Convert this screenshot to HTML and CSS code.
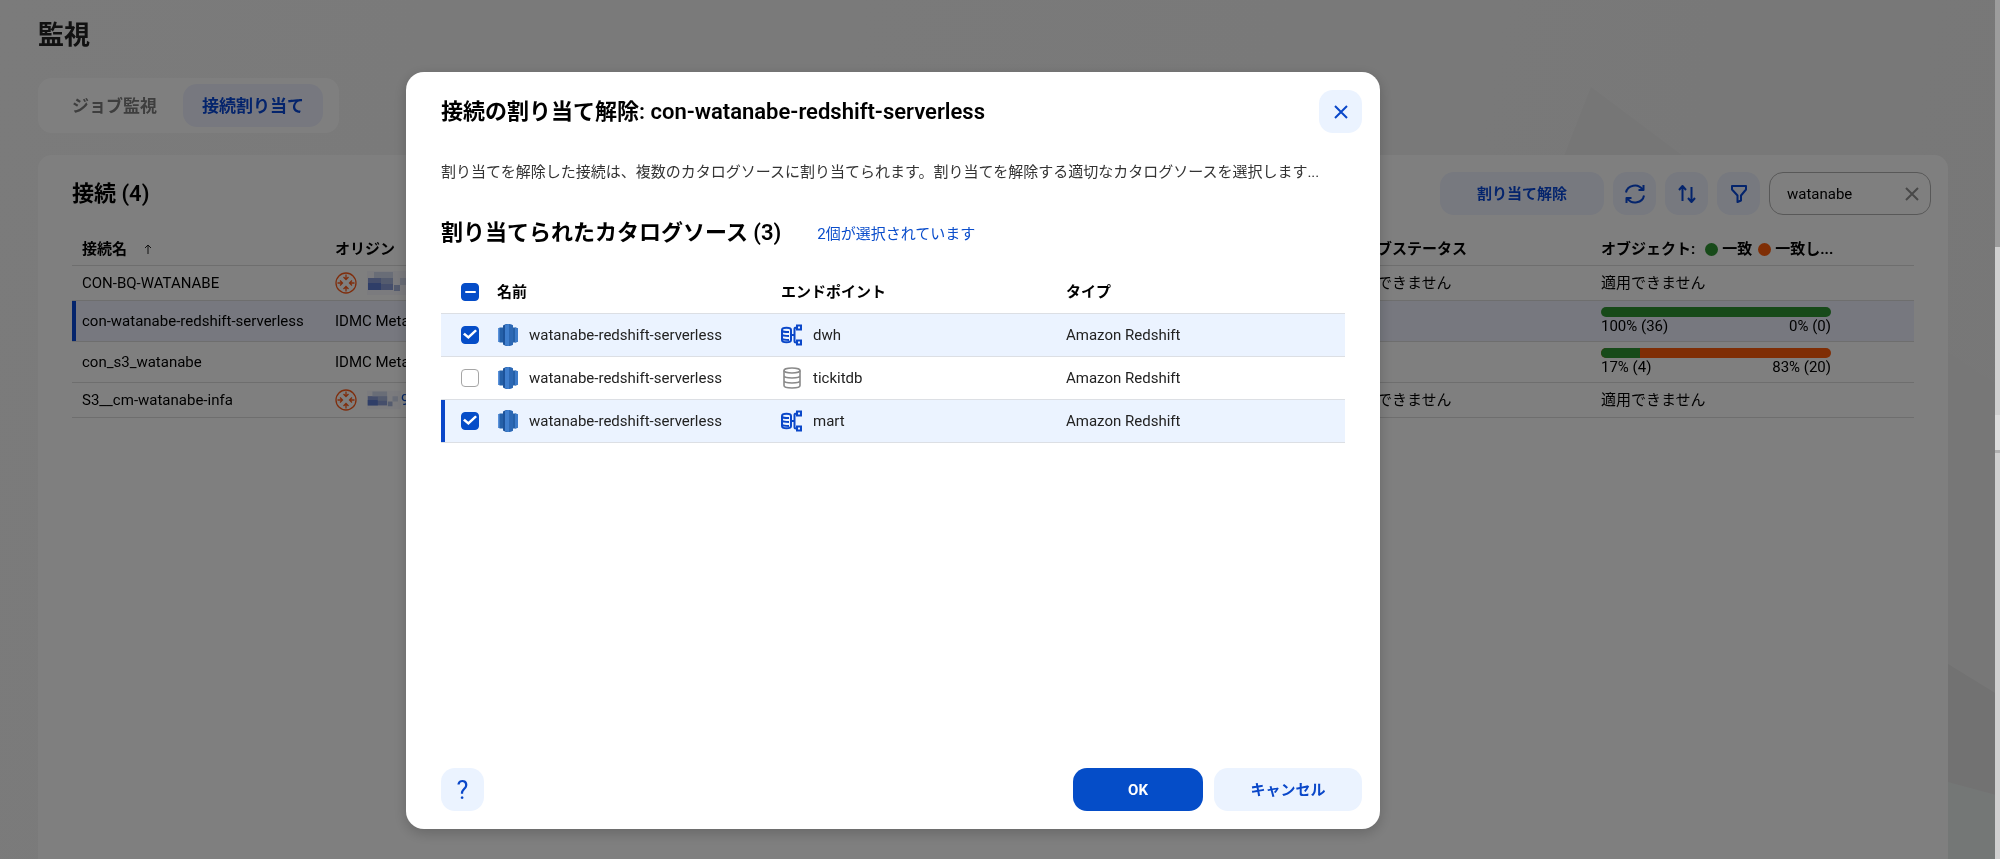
FILE: index.html
```html
<!DOCTYPE html>
<html lang="ja">
<head>
<meta charset="utf-8">
<title>監視</title>
<link rel="stylesheet" href="styles.css">
</head>
<body>
<svg class="symbols" aria-hidden="true">
  <symbol id="i-redshift" viewBox="0 0 22 22">
    <path fill="#2560a8" d="M1 4.500l2-1h16l2 1v13l-2 1H3l-2-1z"/>
    <path fill="#5a92dc" d="M1 4.500l1.500-.7v14.400L1 17.500z"/>
    <path fill="#3d7bc9" d="M18 3.500l3 1v13l-3 1z"/>
    <path fill="#1c539b" d="M6 1.500q5-2.500 5-1.500v22q0 1-5-1.500z"/>
    <path fill="#3f7ecd" d="M8 1q3-1.500 5-.8 3 .8 3 1.300v19q0 .5-3 1.300-2 .7-5-.8z"/>
    <path fill="#2c68b4" d="M12 0q4 .9 4 1.500v19q0 .6-4 1.500z"/>
  </symbol>
  <symbol id="i-schema" viewBox="0 0 22 22">
    <g fill="none" stroke="#0a47c9" stroke-width="2">
      <path d="M1 6v10c0 3 9 3 9 0V6c0-3-9-3-9 0c0 2 2 2 7 2M1 10.500c1 1.500 3 1.500 7 1.500M1 14.500c1 1.500 3 1.500 7 1.500"/>
      <path d="M10 11h3.500M16 3.500h-1q-1.500 0-1.500 1.500v12q0 1.500 1.500 1.500h1M16 1.500h4v4h-4zM16 16.500h4v4h-4z"/>
    </g>
  </symbol>
  <symbol id="i-db" viewBox="0 0 22 22">
    <g fill="none" stroke="#8a8a8a" stroke-width="1.600">
      <ellipse cx="11" cy="3.500" rx="8" ry="2.500"/>
      <path d="M3 3.500v15c0 3.300 16 3.300 16 0v-15M3 8.500c0 3.300 16 3.300 16 0M3 13.500c0 3.300 16 3.300 16 0"/>
    </g>
  </symbol>
  <symbol id="i-origin" viewBox="0 0 22 22">
    <g fill="none" stroke="#ff5c1a" stroke-width="1.300">
      <circle cx="11" cy="11" r="10"/>
      <path d="M11 2.500v5M8.500 5l2.500 2.500 2.500-2.500M11 19.500v-5M8.500 17l2.500-2.500 2.500 2.500M2.500 11h5M5 8.500l2.500 2.500-2.500 2.500M19.500 11h-5M17 8.500l-2.500 2.500 2.500 2.500"/>
    </g>
  </symbol>
  <symbol id="i-mosaic" viewBox="0 0 44 24">
    <path fill="#f6f7fc" d="M0 0h44v24H0z"/>
    <path fill="#8a9cd6" d="M1 7h25v12H1z"/>
    <path fill="#5f7cd0" d="M1 12h13v7H1z"/>
    <path fill="#a9b6dd" d="M14 7h12v6H14zM27 14h6v6h-6z"/>
    <path fill="#d3daee" d="M7 1h19v6H7zM33 7h7v7h-7z"/>
  </symbol>
</svg>

<svg class="backdrop-art" viewBox="0 0 2000 859" preserveAspectRatio="none" aria-hidden="true">
  <path fill="#ececec" d="M1591 87l92 69h-119z"/>
  <path fill="#efefef" d="M1948 352l52 35v472h-52z"/>
  <path fill="#e4e4e4" d="M1948 664l52 32v163h-52z"/>
  <path fill="#e9eeed" d="M1948 782l52 14v63h-52z"/>
</svg>

<main class="page">
  <h1 class="page-title">監視</h1>
  <nav class="tabs">
    <button class="tab" type="button">ジョブ監視</button>
    <button class="tab tab-active" type="button">接続割り当て</button>
  </nav>

  <section class="panel">
    <div class="toolbar">
      <h2 class="heading">接続 (4)</h2>
      <button class="btn btn-soft btn-unassign" type="button">割り当て解除</button>
      <button class="btn btn-soft btn-icon" type="button" aria-label="更新">
        <svg class="icon" viewBox="0 0 20 20"><path d="M1 8.500a9 8.500 0 0 1 16.500-3M18.500 1v5h-5M19 11.500a9 8.500 0 0 1-16.500 3M1.500 19v-5h5"/></svg>
      </button>
      <button class="btn btn-soft btn-icon" type="button" aria-label="並べ替え">
        <svg class="icon" viewBox="0 0 20 20"><path d="M5.500 17V2M2 6l3.500-4L9 6M14.500 3v15M11 14l3.500 4 3.500-4"/></svg>
      </button>
      <button class="btn btn-soft btn-icon" type="button" aria-label="フィルタ">
        <svg class="icon" viewBox="0 0 20 20"><path d="M3 2h14v3.500L12 11.500v5L8.500 18v-6.500L3 5.500z"/></svg>
      </button>
      <div class="search">
        <input class="search-input" type="text" value="watanabe" aria-label="検索">
        <button class="search-clear" type="button" aria-label="クリア">
          <svg class="clear-icon" viewBox="0 0 14 14"><path d="M1 1l12 12M13 1L1 13"/></svg>
        </button>
      </div>
    </div>

    <table class="grid">
      <colgroup><col class="g-name"><col><col class="g-status"><col class="g-objects"></colgroup>
      <thead>
        <tr>
          <th>接続名<svg class="sort" viewBox="0 0 8 10"><path d="M4 10V1M1 4l3-3 3 3"/></svg></th>
          <th>オリジン</th>
          <th>ジョブステータス</th>
          <th><div class="legend">オブジェクト:<span class="dot dot-match"></span>一致<span class="dot dot-miss"></span>一致し...</div></th>
        </tr>
      </thead>
      <tbody>
        <tr>
          <td>CON-BQ-WATANABE</td>
          <td><div class="origin"><svg class="icon-l"><use href="#i-origin"/></svg><svg class="mosaic"><use href="#i-mosaic"/></svg></div></td>
          <td>適用できません</td>
          <td>適用できません</td>
        </tr>
        <tr class="tall picked">
          <td>con-watanabe-redshift-serverless</td>
          <td>IDMC Metadata</td>
          <td></td>
          <td>
            <div class="meter"><span class="meter-match" style="width:100%"></span></div>
            <div class="meter-labels"><span>100% (36)</span><span>0% (0)</span></div>
          </td>
        </tr>
        <tr class="tall">
          <td>con_s3_watanabe</td>
          <td>IDMC Metadata</td>
          <td></td>
          <td>
            <div class="meter"><span class="meter-match" style="width:17%"></span></div>
            <div class="meter-labels"><span>17% (4)</span><span>83% (20)</span></div>
          </td>
        </tr>
        <tr>
          <td>S3__cm-watanabe-infa</td>
          <td><div class="origin"><svg class="icon-l"><use href="#i-origin"/></svg><svg class="mosaic mosaic-short"><use href="#i-mosaic"/></svg><a class="link" href="#">9</a></div></td>
          <td>適用できません</td>
          <td>適用できません</td>
        </tr>
      </tbody>
    </table>
  </section>
</main>

<div class="edge"><span class="edge-thumb"></span><span class="edge-mark"></span></div>

<div class="overlay">
  <div class="dialog" role="dialog" aria-modal="true" aria-labelledby="dialog-title">
    <header class="dialog-head">
      <h2 class="heading" id="dialog-title">接続の割り当て解除: con-watanabe-redshift-serverless</h2>
      <button class="btn btn-tint btn-icon" type="button" aria-label="閉じる">
        <svg class="close-icon" viewBox="0 0 14 14"><path d="M1 1l12 12M13 1L1 13"/></svg>
      </button>
    </header>
    <div class="dialog-body">
      <p class="note">割り当てを解除した接続は、複数のカタログソースに割り当てられます。割り当てを解除する適切なカタログソースを選択します...</p>
      <div class="subhead">
        <h3 class="heading">割り当てられたカタログソース (3)</h3>
        <a class="link" href="#">2個が選択されています</a>
      </div>
      <table class="sources">
        <colgroup><col class="s-check"><col class="s-name"><col class="s-endpoint"><col></colgroup>
        <thead>
          <tr>
            <th><input class="check check-mixed" type="checkbox" aria-label="すべて選択"></th>
            <th>名前</th>
            <th>エンドポイント</th>
            <th>タイプ</th>
          </tr>
        </thead>
        <tbody>
          <tr class="chosen">
            <td><input class="check" type="checkbox" checked aria-label="dwh を選択"></td>
            <td><div class="item"><svg class="icon-l"><use href="#i-redshift"/></svg>watanabe-redshift-serverless</div></td>
            <td><div class="item"><svg class="icon-l"><use href="#i-schema"/></svg>dwh</div></td>
            <td>Amazon Redshift</td>
          </tr>
          <tr>
            <td><input class="check" type="checkbox" aria-label="tickitdb を選択"></td>
            <td><div class="item"><svg class="icon-l"><use href="#i-redshift"/></svg>watanabe-redshift-serverless</div></td>
            <td><div class="item"><svg class="icon-l"><use href="#i-db"/></svg>tickitdb</div></td>
            <td>Amazon Redshift</td>
          </tr>
          <tr class="chosen current">
            <td><input class="check" type="checkbox" checked aria-label="mart を選択"></td>
            <td><div class="item"><svg class="icon-l"><use href="#i-redshift"/></svg>watanabe-redshift-serverless</div></td>
            <td><div class="item"><svg class="icon-l"><use href="#i-schema"/></svg>mart</div></td>
            <td>Amazon Redshift</td>
          </tr>
        </tbody>
      </table>
    </div>
    <footer class="dialog-foot">
      <button class="btn btn-tint btn-icon btn-help" type="button" aria-label="ヘルプ">?</button>
      <button class="btn btn-solid" type="button">OK</button>
      <button class="btn btn-tint btn-cancel" type="button">キャンセル</button>
    </footer>
  </div>
</div>
</body>
</html>
```
FILE: styles.css
```css
* { box-sizing: border-box; }

html, body { height: 100%; }

body {
  margin: 0;
  overflow: hidden;
  background: linear-gradient(100deg, #f6f6f6, #f3f3f3 60%, #efefef);
  color: #000;
  font: 15px/20px Roboto, "Noto Sans CJK JP", sans-serif;
}

h1, h2, h3, p { margin: 0; }

button, input { font: inherit; color: inherit; margin: 0; }

button { border: 0; padding: 0; background: none; cursor: pointer; }

.symbols { position: absolute; width: 0; height: 0; }

.backdrop-art { position: fixed; inset: 0; z-index: -1; width: 100%; height: 100%; }

.page {
  display: flex;
  flex-direction: column;
  height: 100%;
  padding: 18px 52px 0 38px;
}

.page-title { font-size: 26px; line-height: 34px; color: #222; }

.tabs {
  display: flex;
  align-self: flex-start;
  gap: 8px;
  margin-top: 26px;
  padding: 6px 16px;
  border-radius: 14px;
  background: #fff;
}

.tab {
  height: 43px;
  padding: 0 18px;
  border-radius: 14px;
  font-size: 17px;
  font-weight: 700;
  color: #7d7d7d;
}

.tab-active { padding: 0 19px; background: #eef1ff; color: #0848d8; }

.panel {
  flex: 1;
  margin-top: 22px;
  padding: 17px 17px 0 34px;
  border-radius: 14px 14px 0 0;
  background: #fff;
}

.toolbar { display: flex; align-items: center; gap: 9px; }

.toolbar .heading { flex: 1; }

.heading { font-size: 22px; line-height: 28px; font-weight: 600; }

.btn {
  height: 43px;
  border-radius: 14px;
  font-weight: 700;
  color: #0848d8;
}

.btn-soft { background: #eef2ff; }
.btn-tint { background: #ebf3ff; }
.btn-unassign { width: 164px; }

.btn-icon {
  display: flex;
  align-items: center;
  justify-content: center;
  width: 43px;
}

.icon {
  width: 20px;
  height: 20px;
  fill: none;
  stroke: #0848d8;
  stroke-width: 2;
  stroke-linejoin: round;
}

.search {
  display: flex;
  align-items: center;
  width: 162px;
  height: 43px;
  padding: 0 11px 0 17px;
  border: 1px solid #b0b0b0;
  border-radius: 14px;
}

.search-input { flex: 1; min-width: 0; padding: 0; border: 0; outline: 0; background: none; }

.search-clear { display: flex; }

.clear-icon { width: 14px; height: 14px; fill: none; stroke: #909090; stroke-width: 2; }

table { border-collapse: collapse; table-layout: fixed; }

th, td { padding: 0; text-align: left; white-space: nowrap; }

th { font-weight: 700; }

.grid { width: calc(100% - 17px); margin-top: 17px; }

.grid th, .grid td { height: 35px; padding-left: 10px; border-bottom: 1px solid #dcdcdc; }

.grid th { height: 33px; padding-top: 2px; }

.grid .tall td { height: 41px; }

.g-name { width: 253px; }
.g-status { width: 254px; }
.g-objects { width: 323px; }

.picked { background: #eef1ff; }

.picked td:first-child { box-shadow: inset 4px 0 #0848d8; }

.sort { width: 8px; height: 10px; margin-left: 17px; fill: none; stroke: #222; }

.legend { display: flex; align-items: center; }

.dot { width: 13px; height: 13px; margin: 0 4px 0 10px; border-radius: 50%; }

.dot-match { background: #2f9433; }
.dot-miss { margin-left: 6px; background: #ff5c0a; }

.origin, .item { display: flex; align-items: center; }

.icon-l { flex: none; width: 22px; height: 22px; }

.mosaic { width: 44px; height: 24px; margin-left: 10px; }
.mosaic-short { width: 34px; }

.link { color: #0a4dcb; text-decoration: none; }

.meter {
  display: flex;
  width: 230px;
  height: 10px;
  overflow: hidden;
  border-radius: 5px;
  background: #ff5c0a;
}

.meter-match { background: #2f9433; }

.meter-labels {
  display: flex;
  justify-content: space-between;
  width: 230px;
  line-height: 18px;
}

.edge {
  position: fixed;
  top: 0;
  right: 0;
  bottom: 0;
  width: 5px;
  background: #d0d0d0;
}

.edge-thumb { display: block; height: 247px; background: #9c9c9c; }

.edge-mark { display: block; height: 38px; margin-top: 168px; border-bottom: 3px solid #b0b0b0; background: #dedede; }

.overlay {
  position: fixed;
  inset: 0 5px 0 0;
  display: grid;
  grid-template-columns: 406fr 974fr 615fr;
  padding: 72px 0 30px;
  background: rgba(0, 0, 0, 0.5);
}

.dialog {
  grid-column: 2;
  display: flex;
  flex-direction: column;
  min-width: 0;
  padding: 18px 18px 18px 35px;
  border-radius: 18px;
  background: #fff;
  box-shadow: 0 4px 14px rgba(0, 0, 0, 0.2);
}

.dialog-head { display: flex; align-items: center; justify-content: space-between; }

.close-icon { width: 14px; height: 14px; fill: none; stroke: #0a47c9; stroke-width: 2; }

.dialog-body { flex: 1; padding: 29px 17px 0 0; }

.note { overflow: hidden; white-space: nowrap; color: #333; }

.subhead { display: flex; align-items: center; gap: 36px; margin-top: 37px; }

.subhead .link { padding-top: 2px; }

.sources { width: 100%; margin-top: 25px; }

.sources th, .sources td { height: 43px; border-bottom: 1px solid #dcdfe4; }

.sources th { height: 41px; }

.sources td:first-child, .sources th:first-child { padding-left: 20px; }

.s-check { width: 56px; }
.s-name { width: 284px; }
.s-endpoint { width: 285px; }

.chosen { background: #ebf3ff; }

.current td:first-child { box-shadow: inset 4px 0 #0a47c9; }

.item { gap: 10px; color: #222; }

.sources tbody td:last-child { color: #222; }

.check {
  display: grid;
  place-items: center;
  width: 18px;
  height: 18px;
  border: 1px solid #a6a6a6;
  border-radius: 4px;
  appearance: none;
  background: #fff;
}

.check:checked, .check-mixed { border-color: #054dc8; background: #054dc8; }

.check:checked::before {
  content: "";
  width: 14px;
  height: 11px;
  background: #fff;
  clip-path: polygon(0 50%, 13% 34%, 38% 62%, 87% 4%, 100% 18%, 39% 92%);
}

.check-mixed::before { content: ""; width: 11px; height: 2px; border-radius: 1px; background: #fff; }

.dialog-foot { display: flex; align-items: center; gap: 11px; }

.btn-help { margin-right: auto; padding-top: 2px; font-size: 25px; font-weight: 400; color: #0a47c9; }

.btn-solid { width: 130px; background: #054dc8; color: #fff; }

.btn-cancel { width: 148px; color: #0a47c9; }
```
